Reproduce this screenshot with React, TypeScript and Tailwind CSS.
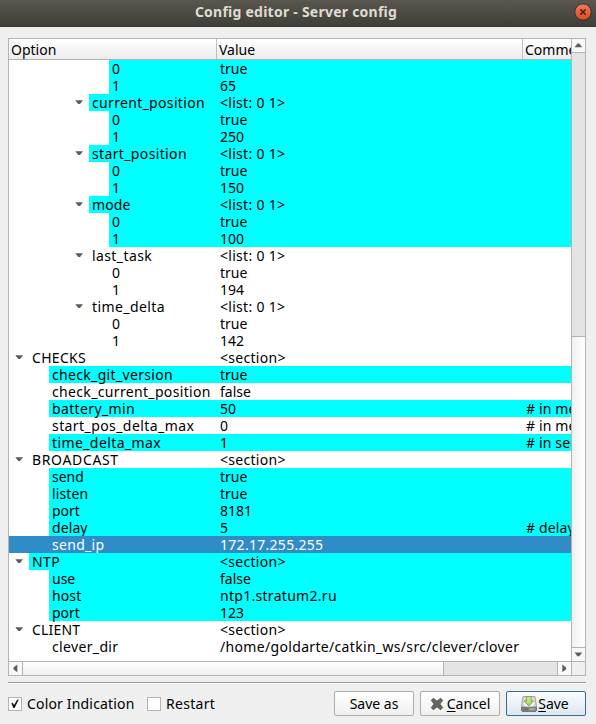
import React from "react";

type Row = {
  name: string;
  value: string;
  depth: number;
  open?: boolean;
  marked?: boolean;
  selected?: boolean;
  comment?: string;
  track?: string;
};

const rows: Row[] = [
  { name: "0", value: "true", depth: 3, marked: true },
  { name: "1", value: "65", depth: 3, marked: true },
  { name: "current_position", value: "<list: 0 1>", depth: 2, open: true, marked: true, track: "tracking-[0.33px]" },
  { name: "0", value: "true", depth: 3, marked: true },
  { name: "1", value: "250", depth: 3, marked: true },
  { name: "start_position", value: "<list: 0 1>", depth: 2, open: true, marked: true, track: "tracking-[0.36px]" },
  { name: "0", value: "true", depth: 3, marked: true },
  { name: "1", value: "150", depth: 3, marked: true },
  { name: "mode", value: "<list: 0 1>", depth: 2, open: true, marked: true, track: "tracking-[0.1px]" },
  { name: "0", value: "true", depth: 3, marked: true },
  { name: "1", value: "100", depth: 3, marked: true },
  { name: "last_task", value: "<list: 0 1>", depth: 2, open: true, track: "tracking-[0.4px]" },
  { name: "0", value: "true", depth: 3 },
  { name: "1", value: "194", depth: 3 },
  { name: "time_delta", value: "<list: 0 1>", depth: 2, open: true, track: "tracking-[0.42px]" },
  { name: "0", value: "true", depth: 3 },
  { name: "1", value: "142", depth: 3 },
  { name: "CHECKS", value: "<section>", depth: 0, open: true, track: "tracking-[0.3px]" },
  { name: "check_git_version", value: "true", depth: 1, marked: true, track: "tracking-[0.33px]" },
  { name: "check_current_position", value: "false", depth: 1, track: "tracking-[0.34px]" },
  { name: "battery_min", value: "50", depth: 1, marked: true, comment: "# in meters", track: "tracking-[0.36px]" },
  { name: "start_pos_delta_max", value: "0", depth: 1, comment: "# in meters", track: "tracking-[0.42px]" },
  { name: "time_delta_max", value: "1", depth: 1, marked: true, comment: "# in seconds", track: "tracking-[0.4px]" },
  { name: "BROADCAST", value: "<section>", depth: 0, open: true, track: "tracking-[0.65px]" },
  { name: "send", value: "true", depth: 1, marked: true },
  { name: "listen", value: "true", depth: 1, marked: true, track: "tracking-[0.1px]" },
  { name: "port", value: "8181", depth: 1, marked: true },
  { name: "delay", value: "5", depth: 1, marked: true, comment: "# delay", track: "tracking-[0.1px]" },
  { name: "send_ip", value: "172.17.255.255", depth: 1, selected: true, track: "tracking-[0.3px]" },
  { name: "NTP", value: "<section>", depth: 0, open: true, marked: true, track: "tracking-[0.4px]" },
  { name: "use", value: "false", depth: 1, marked: true },
  { name: "host", value: "ntp1.stratum2.ru", depth: 1, marked: true, track: "tracking-[0.1px]" },
  { name: "port", value: "123", depth: 1, marked: true },
  { name: "CLIENT", value: "<section>", depth: 0, open: true, track: "tracking-[0.2px]" },
  { name: "clever_dir", value: "/home/goldarte/catkin_ws/src/clever/clover", depth: 1, track: "tracking-[0.35px]" },
];

const indent = ["w-5", "w-10", "w-20", "w-25"];

function valueTrack(value: string) {
  if (value.startsWith("/")) return "tracking-[0.33px]";
  return value.length > 5 ? "tracking-[0.29px]" : "";
}

function Arrow({ d }: { d: string }) {
  return (
    <svg width="9" height="9" viewBox="0 0 9 9" className="shrink-0">
      <path d={d} fill="#5c5c5c" />
    </svg>
  );
}

function TreeRow({ row }: { row: Row }) {
  const bg = row.selected ? "text-white" : row.marked ? "bg-[#00ffff]" : "";
  return (
    <div className={"flex h-[17px] shrink-0 whitespace-nowrap " + (row.selected ? "bg-[#308cc6]" : "")}>
      <div className={"flex shrink-0 items-center justify-end pr-[5px] " + indent[row.depth]}>
        {row.open && <Arrow d="M0.3 2.2H8L5 6H3.3Z" />}
      </div>
      <div className={"flex min-w-0 grow " + bg}>
        <div className={"min-w-0 grow pl-[3px] " + (row.track ?? "")}>{row.name}</div>
        <div className={"w-[306px] shrink-0 pl-[3px] " + valueTrack(row.value)}>{row.value}</div>
        <div className="w-[48px] shrink-0 overflow-hidden pl-[3px] tracking-[0.15px]">{row.comment}</div>
      </div>
    </div>
  );
}

function Check({ label, checked, className }: { label: string; checked?: boolean; className?: string }) {
  return (
    <label className={"flex items-center gap-[5px] " + (className ?? "")}>
      <span className="flex size-[14px] items-center justify-center border border-[#b4b4b4] bg-white">
        {checked && (
          <svg width="10" height="10" viewBox="0 0 10 10">
            <path d="M1.3 4.2L2.8 3.8L4 6L7.2 0.8L8.8 0.6L4.6 9H3.4Z" fill="#111" />
          </svg>
        )}
      </span>
      <span>{label}</span>
    </label>
  );
}

function CancelIcon() {
  return (
    <svg width="14" height="14" viewBox="0 0 14 14">
      <path
        d="M1.3 3.4L3.4 1.3L7 4.2L10.6 1.3L12.7 3.4L9.8 7L12.7 10.6L10.6 12.7L7 9.8L3.4 12.7L1.3 10.6L4.2 7Z"
        fill="#646663"
        stroke="#4a4c49"
        strokeWidth="0.9"
        strokeLinejoin="round"
      />
    </svg>
  );
}

function SaveIcon() {
  return (
    <svg width="16" height="16" viewBox="0 0 16 16">
      <defs>
        <linearGradient id="disk" x1="0" y1="0" x2="0" y2="1">
          <stop offset="0" stopColor="#e2e3e1" />
          <stop offset="1" stopColor="#c4c6c2" />
        </linearGradient>
        <linearGradient id="down" x1="0" y1="0" x2="0" y2="1">
          <stop offset="0" stopColor="#d9efa8" />
          <stop offset="1" stopColor="#a0d04f" />
        </linearGradient>
      </defs>
      <path d="M2 0.6H14L15.5 10.5V14.5L14.7 15.4H1.3L0.5 14.5V10.5Z" fill="url(#disk)" stroke="#9a9c98" strokeWidth="0.9" />
      <ellipse cx="8" cy="7.5" rx="5.5" ry="4" fill="#f4f4f3" />
      <path d="M0.6 11.2H15.4V14.4L14.6 15.3H1.4L0.6 14.4Z" fill="#8d8f8b" stroke="#5f615d" strokeWidth="0.8" />
      <path d="M2.3 12.2H7.5V14.2H2.3Z" fill="#6c6e6a" />
      <path d="M9.2 12.2V14.2M11 12.2V14.2M12.8 12.2V14.2" stroke="#c8cac6" strokeWidth="0.8" />
      <path d="M5.4 0.6H10.2V5H12.5L7.8 10L3.1 5H5.4Z" fill="url(#down)" stroke="#739f35" strokeWidth="0.9" />
    </svg>
  );
}

const button =
  "flex h-[25px] w-20 items-center justify-center rounded-[2px] border bg-linear-to-b ";

export default function App() {
  return (
    <div className="flex h-[724px] w-[596px] flex-col overflow-hidden bg-[#efefef] font-['Noto_Sans','Open_Sans',sans-serif] text-[14px] leading-[17px] text-black">
      <div className="flex h-[27px] shrink-0 items-center border-b border-[#3a3934] bg-linear-to-b from-[#5a574f] to-[#3f3e39]">
        <div className="w-[18px]" />
        <div className="grow pb-[3px] text-center text-[14px] font-bold tracking-[0.24px] text-[#dfdbd2]">
          Config editor - Server config
        </div>
        <div className="flex w-[22px] justify-start pb-[3px]">
          <svg width="18" height="18" viewBox="0 0 18 18">
            <defs>
              <linearGradient id="close" x1="0" y1="0" x2="0" y2="1">
                <stop offset="0" stopColor="#f37b57" />
                <stop offset="1" stopColor="#df4a1b" />
              </linearGradient>
            </defs>
            <circle cx="9" cy="9" r="8.2" fill="url(#close)" stroke="#35322c" strokeWidth="1" />
            <path d="M6.4 6.4L11.6 11.6M11.6 6.4L6.4 11.6" stroke="#47281b" strokeWidth="1.5" />
          </svg>
        </div>
      </div>

      <div className="mx-2 mt-[11px] flex h-[638px] w-[578px] shrink-0 flex-col border border-[#b4b4b4] bg-white">
        <div className="flex h-[622px] shrink-0">
          <div className="flex w-[562px] shrink-0 flex-col overflow-hidden">
            <div className="flex h-[21px] shrink-0 items-center border-b border-[#b0b0b0] bg-linear-to-b from-white to-[#ececec] whitespace-nowrap">
              <div className="flex h-full w-[208px] shrink-0 items-center border-r border-[#c0c0c0] pl-[2px]">Option</div>
              <div className="flex h-full w-[306px] shrink-0 items-center border-r border-[#c0c0c0] pl-[2px]">Value</div>
              <div className="w-[48px] shrink-0 overflow-hidden pl-[2px]">Comment</div>
            </div>
            {rows.map((row, i) => (
              <TreeRow key={i} row={row} />
            ))}
          </div>
          <div className="flex w-[14px] shrink-0 flex-col border-l border-[#b4b4b4] bg-[#e4e4e4]">
            <div className="flex h-[14px] items-center justify-center border-b border-[#b4b4b4] bg-[#f8f8f8]">
              <Arrow d="M0.5 6.2H8.2L5.2 2.4H3.5Z" />
            </div>
            <div className="h-[283px]" />
            <div className="grow border-t border-[#b4b4b4] bg-linear-to-r from-[#f0f0f0] to-white" />
            <div className="flex h-[14px] items-center justify-center border-t border-[#b4b4b4] bg-[#f8f8f8]">
              <Arrow d="M0.5 2.4H8.2L5.2 6.2H3.5Z" />
            </div>
          </div>
        </div>
        <div className="flex h-[14px] shrink-0 border-t border-[#b4b4b4] bg-[#e4e4e4]">
          <div className="flex w-[14px] items-center justify-center border-r border-[#b4b4b4] bg-[#f8f8f8]">
            <Arrow d="M6.3 0.5V8.3L2.5 5.3V3.6Z" />
          </div>
          <div className="w-[421px] border-r border-[#b4b4b4] bg-linear-to-b from-white to-[#f0f0f0]" />
          <div className="grow" />
          <div className="flex w-[14px] items-center justify-center border-l border-[#b4b4b4] bg-[#f8f8f8]">
            <Arrow d="M2.3 0.5V8.3L6.1 5.3V3.6Z" />
          </div>
          <div className="w-[14px] border-l border-[#b4b4b4] bg-[#efefef]" />
        </div>
      </div>

      <div className="mt-[6px] ml-2 h-[2px] w-[578px] shrink-0 border-t border-[#9c9c9c] bg-white" />

      <div className="mt-[7px] ml-2 flex h-[25px] w-[578px] shrink-0 items-center whitespace-nowrap">
        <Check label="Color Indication" checked className="w-[139px] tracking-[0.17px]" />
        <Check label="Restart" className="tracking-[0.3px]" />
        <div className="grow" />
        <div className="flex gap-[6px]">
          <button className={button + "border-[#adadad] from-white to-[#f0f0f0]"}>Save as</button>
          <button className={button + "gap-[3px] border-[#adadad] from-white to-[#f0f0f0]"}>
            <CancelIcon />
            <span><span className="underline underline-offset-2">C</span>ancel</span>
          </button>
          <button className={button + "gap-px border-[#2e6e99] from-[#fafcfe] to-[#dde7ee] pr-[2px]"}>
            <SaveIcon />
            <span><span className="underline underline-offset-2">S</span>ave</span>
          </button>
        </div>
      </div>
    </div>
  );
}
